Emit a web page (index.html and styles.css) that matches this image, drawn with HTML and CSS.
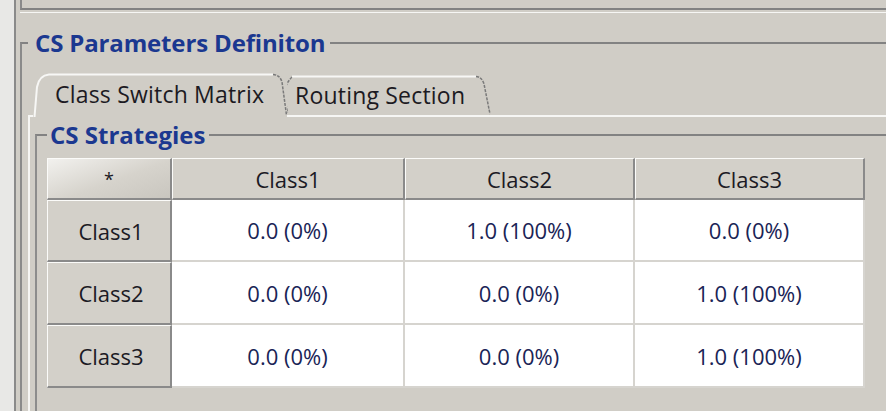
FILE: index.html
```html
<!DOCTYPE html>
<html lang="en">
<head>
<meta charset="utf-8">
<title>CS Parameters</title>
<link rel="stylesheet" href="styles.css">
</head>
<body>
<div class="screen">
  <div class="edge"></div>
  <div class="main">
    <div class="top-wrap"><div class="top-panel"></div></div>
    <fieldset class="group group-outer">
      <legend class="group-title outer-title">CS Parameters Definiton</legend>
      <div class="tabpane">
        <div class="tabs">
          <div class="tab tab-active">
            <svg class="tab-shape" width="254" height="44" viewBox="0 0 254 44">
              <path d="M1.5 44 L4 14 Q6 2.5 16 1.5 L240 1.5" fill="none" stroke="#f7f7f5" stroke-width="2"/>
              <path d="M240 1.5 Q247 2 249 9 L253.5 42" fill="none" stroke="#7a7a7a" stroke-width="1.5" stroke-dasharray="3 1.2"/>
            </svg>
            <span class="tab-label">Class Switch Matrix</span>
          </div>
          <div class="tab tab-idle">
            <svg class="tab-shape" width="209" height="42" viewBox="0 0 209 42">
              <path d="M9 2 Q1 10 1.5 21 L4.5 38" fill="none" stroke="#7a7a7a" stroke-width="1.5" stroke-dasharray="3 1.2"/>
              <path d="M9 1.5 L193 1.5" fill="none" stroke="#f7f7f5" stroke-width="2"/>
              <path d="M193 1.5 Q199 2 201 9 L207 39" fill="none" stroke="#7a7a7a" stroke-width="1.5" stroke-dasharray="3 1.2"/>
            </svg>
            <span class="tab-label">Routing Section</span>
          </div>
        </div>
        <div class="tab-content">
          <fieldset class="group group-inner">
            <legend class="group-title inner-title">CS Strategies</legend>
            <table class="matrix">
              <colgroup>
                <col class="col-head">
                <col class="col-a">
                <col class="col-b">
                <col class="col-c">
              </colgroup>
              <thead>
                <tr>
                  <th class="corner">*</th>
                  <th class="col-title">Class1</th>
                  <th class="col-title">Class2</th>
                  <th class="col-title">Class3</th>
                </tr>
              </thead>
              <tbody>
                <tr class="row-1">
                  <th class="row-title">Class1</th>
                  <td>0.0 (0%)</td>
                  <td>1.0 (100%)</td>
                  <td>0.0 (0%)</td>
                </tr>
                <tr class="row-2">
                  <th class="row-title">Class2</th>
                  <td>0.0 (0%)</td>
                  <td>0.0 (0%)</td>
                  <td>1.0 (100%)</td>
                </tr>
                <tr class="row-3">
                  <th class="row-title">Class3</th>
                  <td>0.0 (0%)</td>
                  <td>0.0 (0%)</td>
                  <td>1.0 (100%)</td>
                </tr>
              </tbody>
            </table>
          </fieldset>
        </div>
      </div>
    </fieldset>
  </div>
</div>
</body>
</html>
```
FILE: styles.css
```css
html, body {
  margin: 0;
  height: 411px;
  overflow: hidden;
  background: #d0cdc6;
  font-family: "Open Sans", "Liberation Sans", sans-serif;
}

.screen {
  display: flex;
  height: 411px;
}

.edge {
  width: 14px;
  flex: none;
  background: #e8e8e6;
  border-right: 2px solid #8a8a8a;
}

.main {
  flex: 1;
  min-width: 0;
  padding-left: 4px;
}

.top-wrap {
  padding-bottom: 2px;
  border-bottom: 1px solid #f6f6f4;
}

.top-panel {
  height: 8px;
  border-left: 2px solid #8a8a8a;
  border-bottom: 2px solid #828282;
}

.group {
  margin: 0;
  padding: 0;
  border: none;
  min-width: 0;
}

.group-outer {
  margin-top: 15px;
  border-top: 2px solid #828282;
  border-left: 2px solid #8a8a8a;
}

.group-title {
  font-weight: 700;
  color: #1b3890;
  line-height: 30px;
}

.outer-title {
  font-size: 24px;
  letter-spacing: -0.15px;
  margin-left: 6px;
  padding: 0 5px 0 7px;
}

.tabpane {
  margin-left: 6px;
  margin-top: 15px;
}

.tabs {
  display: flex;
  align-items: flex-end;
  height: 42px;
  padding-left: 5px;
}

.tab {
  position: relative;
  display: flex;
  align-items: center;
  box-sizing: border-box;
  font-size: 23px;
  letter-spacing: 0.2px;
  color: #1c1a22;
}

.tab-shape {
  position: absolute;
  left: 0;
  top: 0;
}

.tab-label {
  position: relative;
}

.tab-active {
  width: 254px;
  height: 44px;
  margin-bottom: -2px;
  padding-left: 22px;
  padding-bottom: 2px;
  z-index: 2;
  background: #d0cdc6;
}

.tab-idle {
  width: 209px;
  height: 40px;
  margin-left: -4px;
  padding-left: 12px;
  z-index: 1;
}

.tab-content {
  border-top: 2px solid #f6f6f4;
  border-left: 2px solid #f6f6f4;
}

.group-inner {
  margin-left: 5px;
  margin-top: 3px;
  padding: 8px 0 40px 10px;
  border-top: 2px solid #828282;
  border-left: 2px solid #8c8c8c;
}

.inner-title {
  font-size: 24px;
  margin-left: 0;
  padding: 0 4px 0 3px;
}

.matrix {
  width: 818px;
  table-layout: fixed;
  border-collapse: separate;
  border-spacing: 0;
  font-size: 22px;
}

.col-head { width: 125px; }
.col-a { width: 233px; }
.col-b { width: 230px; }
.col-c { width: 230px; }

.matrix th {
  font-weight: 400;
  color: #1b1a24;
  background: #d3d0c9;
  box-sizing: border-box;
  border-top: 1px solid #fbfbf9;
  border-left: 1px solid #fbfbf9;
  border-right: 2px solid #8a8a8a;
  border-bottom: 2px solid #8a8a8a;
  text-align: center;
  padding: 0;
}

.matrix thead th {
  height: 42px;
}

.matrix .corner {
  background: linear-gradient(160deg, #f2f1ee 0%, #d6d3cc 55%, #c9c6bf 100%);
  font-size: 18px;
}

.matrix .row-title {
  padding-left: 4px;
}

.row-1 th, .row-1 td { height: 62px; }
.row-2 th, .row-2 td { height: 63px; }
.row-3 th, .row-3 td { height: 63px; }

.matrix td {
  background: #ffffff;
  color: #1a2456;
  text-align: center;
  box-sizing: border-box;
  border-right: 2px solid #d6d4cf;
  border-bottom: 2px solid #d6d4cf;
  padding: 0;
}
```
